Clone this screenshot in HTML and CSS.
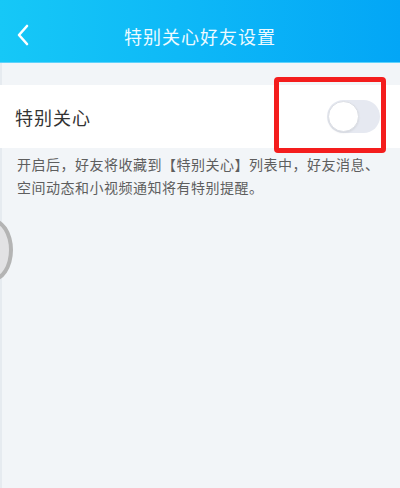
FILE: index.html
```html
<!DOCTYPE html>
<html lang="zh-CN">
<head>
<meta charset="utf-8">
<title>特别关心好友设置</title>
<link rel="stylesheet" href="styles.css">
</head>
<body>
<div class="page">
  <header class="nav">
    <div class="back">
      <svg width="14" height="22" viewBox="0 0 14 22"><path d="M11 2 L3 11 L11 20" fill="none" stroke="#fff" stroke-width="2.6" stroke-linecap="round" stroke-linejoin="round"/></svg>
    </div>
    <h1 class="title">特别关心好友设置</h1>
  </header>
  <div class="gap"></div>
  <div class="row">
    <span class="label">特别关心</span>
    <div class="toggle-wrap">
      <div class="toggle"><div class="knob"></div></div>
      <div class="highlight"></div>
    </div>
  </div>
  <p class="desc">开启后，好友将收藏到【特别关心】列表中，好友消息、空间动态和小视频通知将有特别提醒。</p>
  <div class="artifact"></div>
</div>
</body>
</html>
```
FILE: styles.css
```css
* { box-sizing: border-box; }
html, body { margin: 0; padding: 0; }
body {
  width: 400px;
  height: 488px;
  overflow: hidden;
  background: #f2f5f8;
  font-family: "Noto Sans CJK SC", "Noto Sans", sans-serif;
}
.page {
  position: relative;
  height: 488px;
  border-left: 2px solid #e6ebf0;
}
.nav {
  height: 63px;
  margin-left: -2px;
  background: linear-gradient(90deg, #16c8f7 0%, #0db7f7 50%, #03a6f6 100%);
  display: flex;
  align-items: center;
  position: relative;
  border-bottom: 1px solid #5fd2fb;
  padding-top: 6px;
}
.back {
  width: 44px;
  padding-left: 16px;
  display: flex;
  align-items: center;
  margin-top: 2px;
}
.title {
  flex: 1;
  margin: 0 44px 0 0;
  text-align: center;
  color: #eefaff;
  font-size: 18px;
  font-weight: 400;
  letter-spacing: 1px;
  margin-top: 3px;
}
.gap { height: 22px; }
.row {
  height: 63px;
  background: #fff;
  display: flex;
  align-items: center;
  justify-content: space-between;
  padding: 0 18px 0 15px;
  margin-left: -2px;
}
.label {
  font-size: 18px;
  color: #333;
  letter-spacing: 1px;
}
.toggle-wrap {
  position: relative;
  width: 53px;
  height: 33px;
  margin-right: 2px;
}
.toggle {
  width: 53px;
  height: 33px;
  border-radius: 17px;
  background: #e6e9f1;
  padding: 1px;
}
.knob {
  width: 31px;
  height: 31px;
  border-radius: 50%;
  background: #fff;
  border: 1px solid #dcdfe5;
  box-shadow: 0 1px 2px rgba(0,0,0,0.08);
}
.highlight {
  position: absolute;
  left: -53px;
  top: -23px;
  width: 112px;
  height: 76px;
  border: 5px solid #f41d1d;
  border-radius: 4px;
}
.desc {
  margin: 0;
  padding: 5px 16px 0 15px;
  font-size: 14px;
  line-height: 23px;
  color: #5e5e5e;
  letter-spacing: 0.5px;
}
.artifact {
  position: absolute;
  left: -32px;
  top: 218px;
  width: 43px;
  height: 64px;
  border-radius: 50%;
  border: 4px solid #b4b4b4;
  background: #e2e2e4;
  filter: blur(0.6px);
}
```
